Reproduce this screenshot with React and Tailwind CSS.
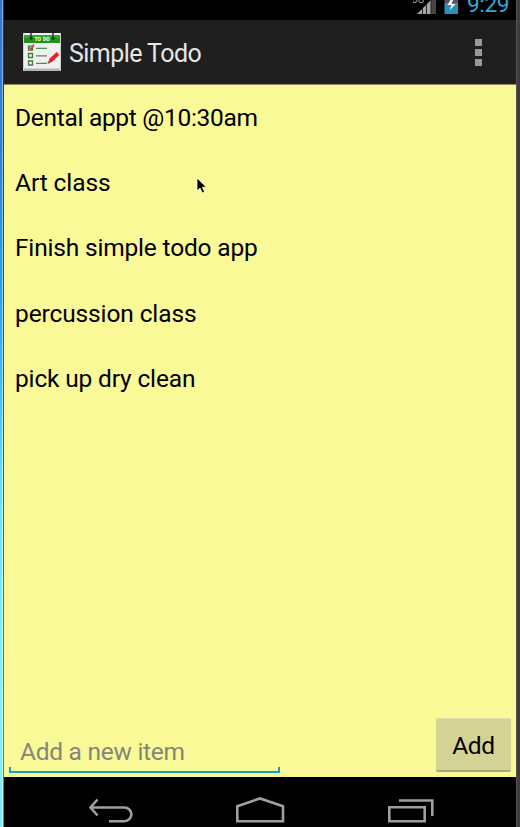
import React from "react";

const items = [
  { text: "Dental appt @10:30am", tracking: "tracking-[-0.3px]" },
  { text: "Art class", tracking: "tracking-[-0.1px]" },
  { text: "Finish simple todo app", tracking: "tracking-[-0.18px]" },
  { text: "percussion class", tracking: "tracking-[-0.12px]" },
  { text: "pick up dry clean", tracking: "tracking-[-0.16px]" },
];

function StatusBar() {
  return (
    <div className="flex h-5 shrink-0 items-start overflow-hidden bg-black pl-[409px]">
      <svg width="45" height="20" viewBox="0 0 45 20" className="mr-[9px] shrink-0">
        <text x="-1" y="2.5" fontSize="10" fill="#aaa" fontFamily="Roboto, sans-serif">3G</text>
        <path d="M18 0h5v14h-5z" fill="#454545" />
        <path d="M4 14 18 0V14Z" fill="#a8a8a8" />
        <path d="M9.5 8v6M13.5 4v10M18 0v14" stroke="#222" strokeWidth="1" />
        <path d="M31.5 0h14v3h-14z" fill="#555" />
        <path d="M31.5 3h14v11h-14z" fill="#2a91b9" />
        <path d="M38 -1 34.5 5h4L36.5 10.5l6-6.5h-4L40.5 -1z" fill="#f4f4f4" />
      </svg>
      <span className="-mt-[11px] text-[22.5px] leading-[30px] tracking-[-0.3px] text-[#33a7dc]">9:29</span>
    </div>
  );
}

function TodoIcon() {
  return (
    <svg width="38" height="38" viewBox="0 0 38 38" className="shrink-0">
      <rect width="38" height="38" fill="#f0eff0" />
      <path d="M0 35.5h38V38H0z" fill="#b5b5b5" />
      <path d="M.5 0v37M37.5 0v37" stroke="#d0d0d0" />
      <path d="M1 2h36v8H1z" fill="#1f9417" />
      <path d="M1 2h36v3H1z" fill="#36aa22" />
      <text x="11.5" y="8" fontSize="5" fontWeight="900" wordSpacing="0.8" fill="#effff0" fontFamily="Roboto, sans-serif">TO DO</text>
      <path d="M8 0v5M30 0v5" stroke="#444" strokeWidth="1.6" />
      <circle cx="8" cy="5" r="1.7" fill="#263426" />
      <circle cx="30" cy="5" r="1.7" fill="#263426" />
      <g fill="none" stroke="#37803d" strokeWidth="1.3">
        <path d="M5.5 13.2h4v4h-4zM5.5 20.5h4v4h-4zM5.5 28h4v4h-4z" />
        <path d="M13 15.3h11M13 22.8h11M13 30.3h11" stroke="#49904c" />
      </g>
      <path d="m6 14 2 2.5L11 11.5" fill="none" stroke="#d83a32" strokeWidth="1.5" />
      <path d="m27 28 8-7.5" stroke="#e3202a" strokeWidth="3.8" />
      <path d="m25 30 3-2.5" stroke="#cc2027" strokeWidth="2" />
    </svg>
  );
}

function ActionBar() {
  return (
    <header className="flex h-[65px] shrink-0 items-center border-b border-[#8e8b5a] bg-[#1f1f1f] pr-[34px] pl-[19px]">
      <TodoIcon />
      <h1 className="ml-[8px] grow pt-[4px] text-[25px] leading-[32px] tracking-[-0.55px] whitespace-nowrap text-[#e6e6e6]">Simple Todo</h1>
      <div className="flex flex-col gap-[3px] pt-px">
        <i className="size-[7px] bg-[#999]" />
        <i className="size-[7px] bg-[#999]" />
        <i className="size-[7px] bg-[#999]" />
      </div>
    </header>
  );
}

function NavBar() {
  return (
    <nav className="h-[50px] shrink-0 bg-black">
      <svg width="512" height="50" viewBox="4 777 512 50" fill="none" stroke="#9f9f9f" strokeWidth="2.6">
        <path d="M97.5 799.5 90.5 807.5 97.5 815.5M91 807.5h33.5a6.8 6.8 0 0 1 0 13.7H109" />
        <path d="M237.3 821.2V806.2L260 798.4 283 806.2V821.2Z" />
        <path d="M389.3 807.3H424.7V821.2H389.3ZM399 800.5H432.3V816" />
      </svg>
    </nav>
  );
}

export default function App() {
  return (
    <div className="relative flex h-[827px] w-[520px] overflow-hidden bg-[#3d3d3d] font-[Roboto,sans-serif]">
      <div className="flex w-1 shrink-0">
        <div className="w-[2px] bg-[linear-gradient(#3978c9_0%,#3380d1_18%,#269ff0_34%,#38b7f6_44%,#6ce2fb_60%,#7ff1fb_80%,#7eeefb_100%)]" />
        <div className="w-px bg-[linear-gradient(#79a9e0,#94d5f8_40%,#c4fbff_65%,#baf7fb)]" />
        <div className="w-px bg-[linear-gradient(#12375e,#275f85_45%,#448b94)]" />
      </div>
      <div className="flex w-[512px] shrink-0 flex-col">
        <StatusBar />
        <ActionBar />
        <main className="flex min-h-0 grow flex-col bg-[#faf998]">
          <ul className="grow pt-[0.7px]">
            {items.map((item) => (
              <li key={item.text} className="flex h-[65.25px] items-center pl-[11px] text-[24.5px] text-black">
                <span className={"whitespace-nowrap " + item.tracking}>{item.text}</span>
              </li>
            ))}
          </ul>
          <div className="flex h-[60px] shrink-0 items-start justify-between pr-[5px] pl-[5px]">
            <div className="mt-[17px] flex h-[39px] w-[271px] flex-col justify-end">
              <span className="pb-px pl-[11px] text-[24.5px] leading-[28px] tracking-[-0.27px] whitespace-nowrap text-[#858579]">Add a new item</span>
              <div className="h-[6px] border-x-2 border-b-2 border-[#159fc0]" />
            </div>
            <button className="mt-px h-[54px] w-[75px] rounded-[2px] border-t border-b-2 border-t-[#dfdda7] border-b-[#aaa979] bg-[#d4d396] pt-[3px] text-[24.5px] tracking-[-0.3px] text-black">Add</button>
          </div>
        </main>
        <NavBar />
      </div>
      <div className="w-1 shrink-0 border-l border-[#555] bg-[#3d3d3d]" />
      <svg className="absolute top-[177px] left-[196px]" width="12" height="18" viewBox="0 0 12 18">
        <path d="M1 1v13l3-3 2.3 5 2.3-1-2.2-4.8H10.5Z" fill="#000" stroke="#fff" strokeWidth=".8" />
      </svg>
    </div>
  );
}
